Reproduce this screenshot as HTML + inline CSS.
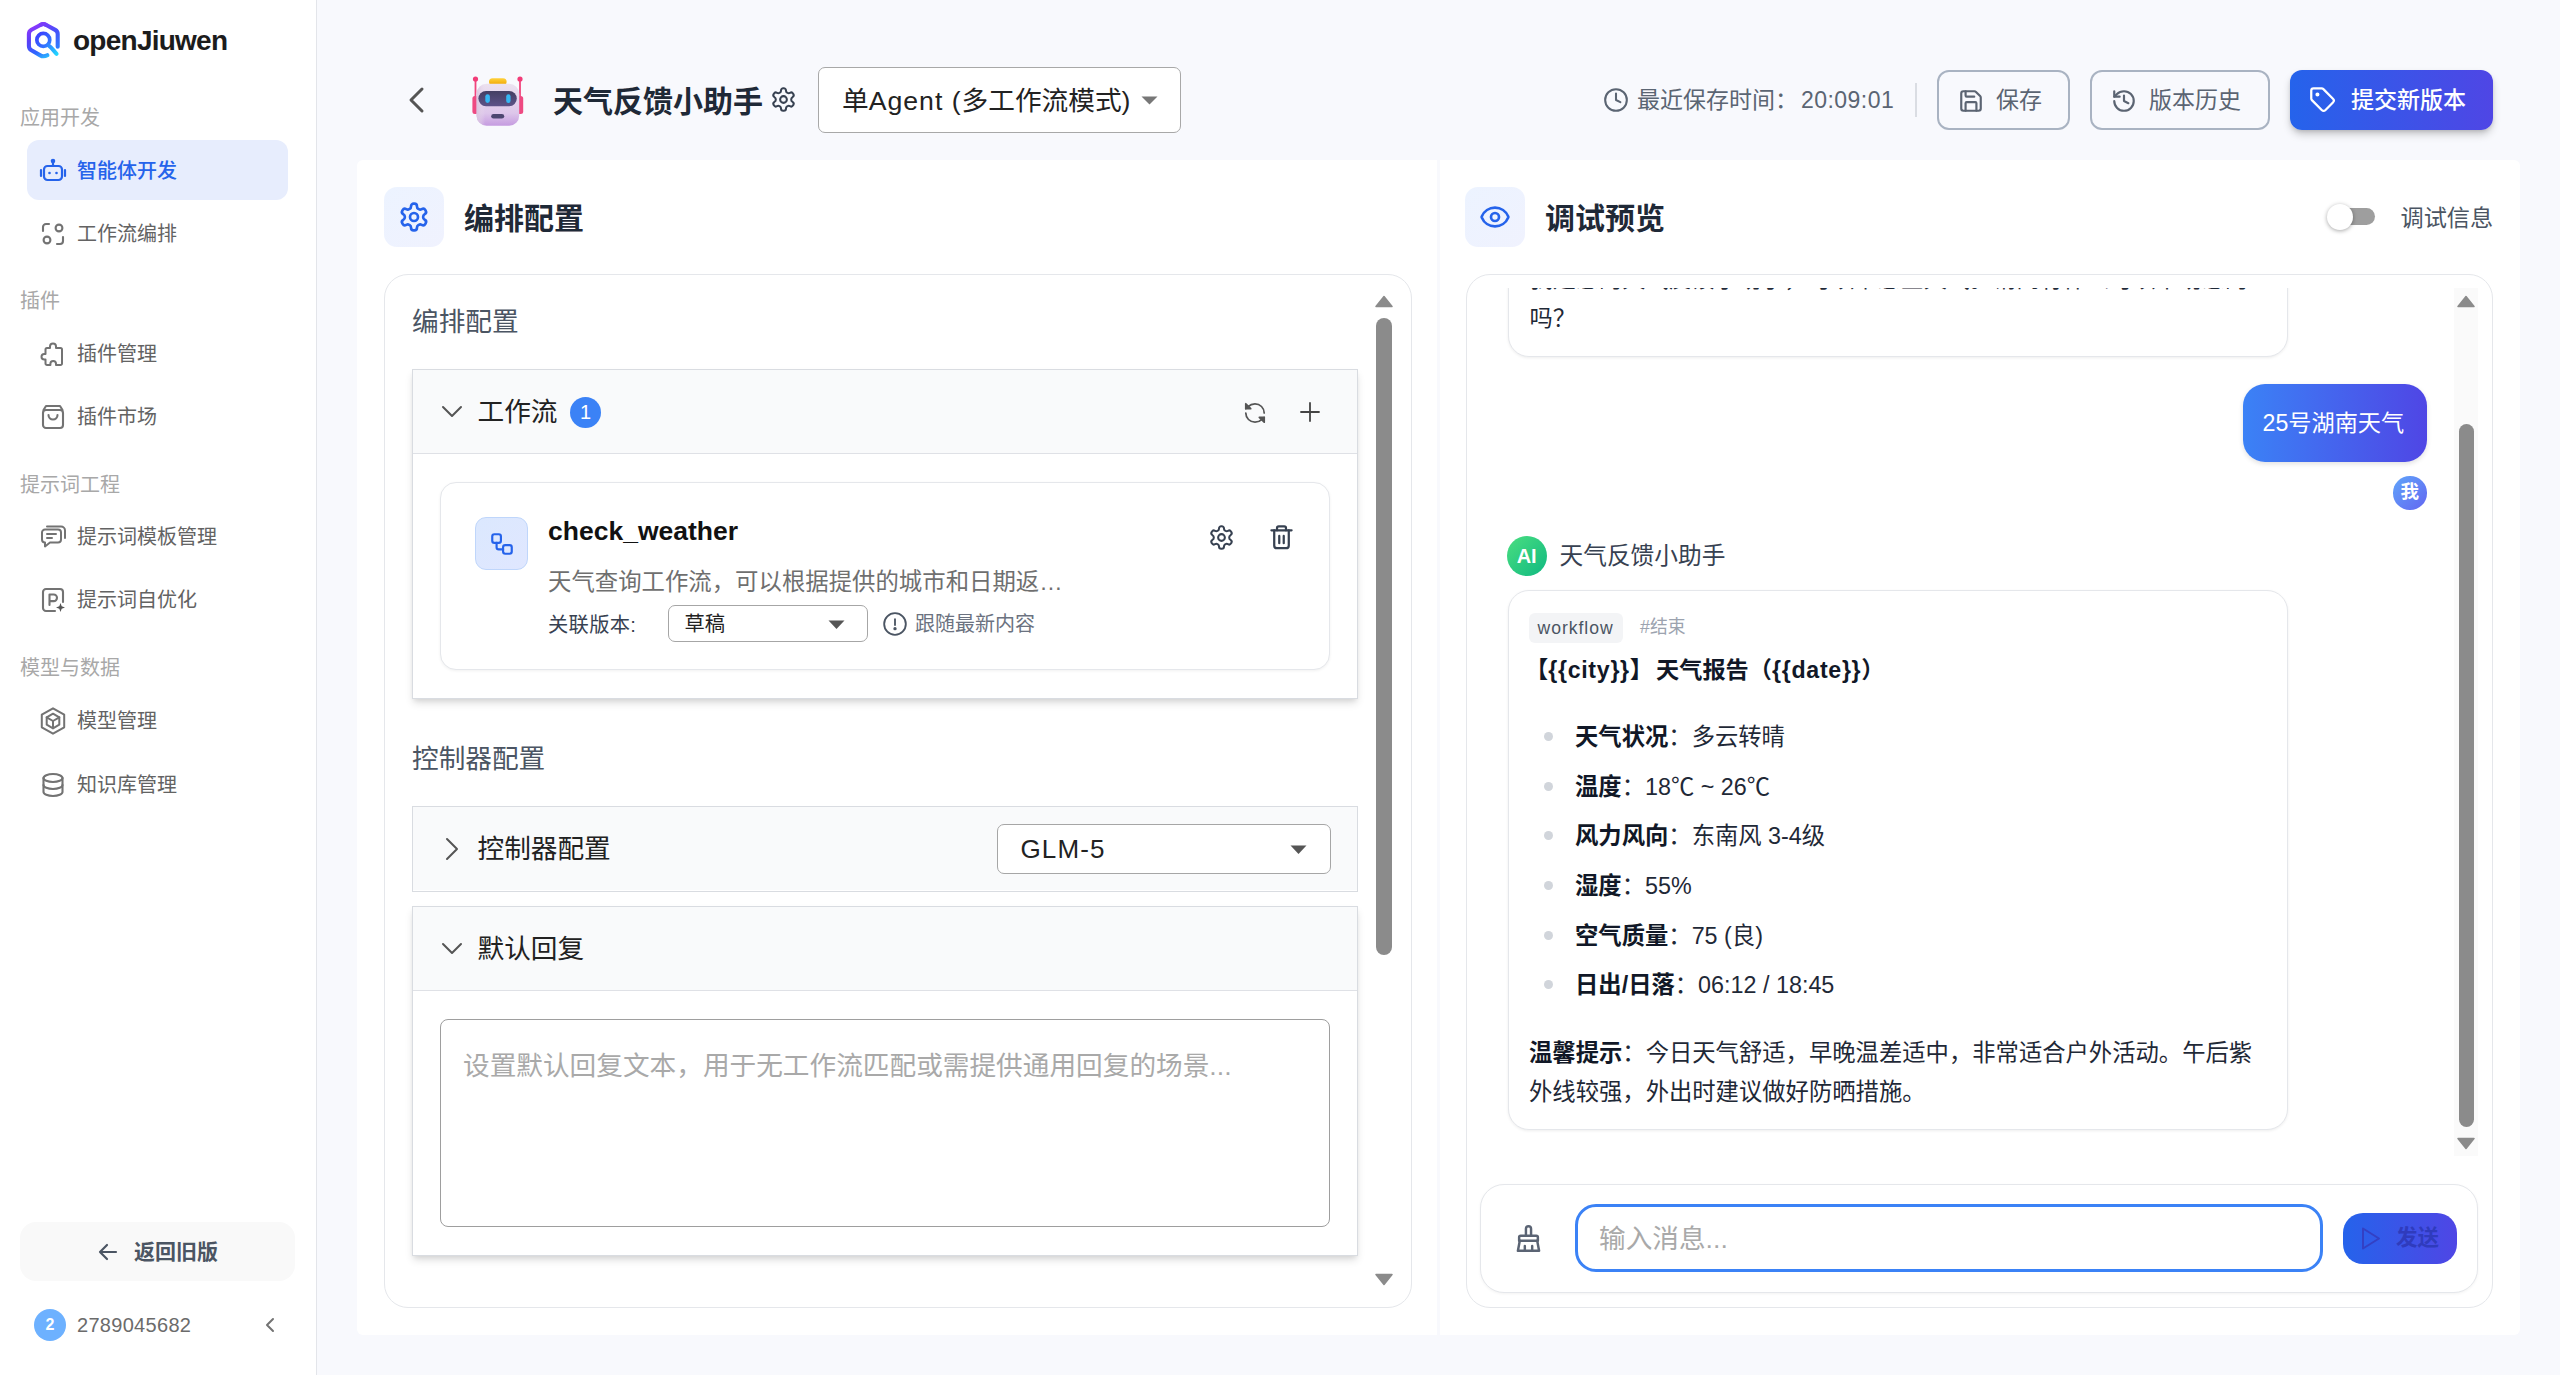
<!DOCTYPE html>
<html lang="zh-CN">
<head>
<meta charset="utf-8">
<title>openJiuwen - 天气反馈小助手</title>
<style>
*{box-sizing:border-box;margin:0;padding:0}
html,body{width:2560px;height:1375px;overflow:hidden}
body{background:#f8f9fd;font-family:"Liberation Sans","Noto Sans CJK SC",sans-serif;color:#1f2937;position:relative}
.abs{position:absolute}
svg{display:block}
/* ---------- sidebar ---------- */
#sidebar{position:absolute;left:0;top:0;width:316.500px;height:1375px;background:#fff;border-right:1.500px solid #e3e5ea}
.logo-text{position:absolute;left:73px;top:21px;font-size:28px;line-height:38px;font-weight:700;color:#1c1c1c;letter-spacing:-0.75px;margin-top:0.500px;white-space:nowrap}
.sec{position:absolute;left:20px;margin-top:1px;font-size:20px;line-height:28px;color:#a8a8a8;white-space:nowrap}
.nav{position:absolute;left:27px;width:261px;height:60px;border-radius:12px;color:#636363;font-size:20px;white-space:nowrap}
.nav .ic{position:absolute;left:12px;top:17px;width:28px;height:28px}
.nav .tx{position:absolute;left:50px;top:16px;line-height:31px}
.nav.on{background:#e7edfd;color:#2563eb}
.nav.on .tx{font-weight:500}
#back-old{position:absolute;left:20px;top:1222px;width:275px;height:59px;border-radius:16px;background:#f9f9f9;color:#4b5563;font-size:21px;font-weight:700}
#user{position:absolute;left:0;top:1300px;width:315px;height:50px}
/* ---------- header ---------- */
.btn{position:absolute;top:70px;height:60px;border:2px solid #a9b3c2;border-radius:12px;color:#5b6472;font-size:23px;white-space:nowrap}
/* ---------- panels ---------- */
.panel{position:absolute;top:160px;height:1175px;background:#fff}
.card{position:absolute;border:1.5px solid #e5e7eb;border-radius:24px;background:#fff}
.ptitle{position:absolute;font-size:30px;line-height:40px;font-weight:700;color:#1f2937;white-space:nowrap}
.picon{position:absolute;width:60px;height:60px;border-radius:13px;background:linear-gradient(135deg,#ecf3ff,#f0f2fe)}

.lbl{position:absolute;left:55px;font-size:26.670px;line-height:36px;color:#4b5563;white-space:nowrap}
.acc{position:absolute;left:55px;width:946px;border:1.500px solid #d9dce1;background:#fff}
.acc.sh{box-shadow:0 5px 8px -1px rgba(0,0,0,.13),0 3px 5px -2px rgba(0,0,0,.08)}
.acc .hd{position:absolute;left:0;top:0;width:100%;height:84px;background:#f9fafb}
.acc .hd.open{border-bottom:1.500px solid #dfe1e6}
.acc .ht{position:absolute;left:64.500px;top:23px;font-size:26.670px;line-height:38px;color:#222;white-space:nowrap}
.sel{position:absolute;border:1.500px solid #a6a6a6;border-radius:7px;background:#fff}
.sbar{position:absolute;width:16px;background:#8b8b8b;border-radius:8px}

.bub{position:absolute;left:67.500px;width:780px;border:1.500px solid #e5e7eb;border-radius:21px;background:#fff;box-shadow:0 1px 3px rgba(0,0,0,.07)}
.li{position:absolute;left:135px;margin-top:0.500px;font-size:23.330px;line-height:36px;color:#1f2937;white-space:nowrap}
.li b{font-weight:700;color:#111827}
.dot{position:absolute;left:103.500px;width:9px;height:9px;border-radius:50%;background:#d1d5db}
</style>
</head>
<body>

<!-- ================= SIDEBAR ================= -->
<div id="sidebar">
  <svg class="abs" style="left:25px;top:21px" width="37" height="38" viewBox="0 0 37 38">
    <defs>
      <linearGradient id="lg1" gradientUnits="userSpaceOnUse" x1="7" y1="4" x2="24" y2="37">
        <stop offset="0" stop-color="#9038ff"/><stop offset="0.35" stop-color="#5a3ef6"/><stop offset="0.72" stop-color="#2f66ff"/><stop offset="1" stop-color="#2cc6ff"/>
      </linearGradient>
      <linearGradient id="lg3" gradientUnits="userSpaceOnUse" x1="18" y1="3" x2="33" y2="27">
        <stop offset="0" stop-color="#7a3bfa"/><stop offset="0.45" stop-color="#4650fa"/><stop offset="1" stop-color="#2f7dff"/>
      </linearGradient>
      <linearGradient id="lg2" gradientUnits="userSpaceOnUse" x1="12" y1="12" x2="25" y2="26">
        <stop offset="0" stop-color="#3d3cff"/><stop offset="1" stop-color="#2f83ff"/>
      </linearGradient>
      <linearGradient id="lg4" gradientUnits="userSpaceOnUse" x1="23" y1="24" x2="32" y2="33">
        <stop offset="0" stop-color="#2f83ff"/><stop offset="1" stop-color="#22d6ff"/>
      </linearGradient>
    </defs>
    <path d="M22.300 34.200 Q18.600 36.300 15.300 34.400 L6.400 29.300 Q3.900 27.800 3.900 25 V13 Q3.900 10.200 6.400 8.700 L15.800 3.700 Q18.300 2.300 20.800 3.700" fill="none" stroke="url(#lg1)" stroke-width="4.100" stroke-linecap="round" stroke-linejoin="round"/>
    <path d="M15.800 3.700 Q18.300 2.300 20.800 3.700 L30.200 8.900 Q32.700 10.300 32.700 13.100 V25.800" fill="none" stroke="url(#lg3)" stroke-width="4.100" stroke-linecap="round" stroke-linejoin="round"/>
    <circle cx="18.300" cy="18.900" r="6.450" fill="none" stroke="url(#lg2)" stroke-width="3.700"/>
    <path d="M23.200 24.200 C26.500 26.500 28.500 29.500 31.600 32.800" fill="none" stroke="url(#lg4)" stroke-width="4" stroke-linecap="round"/>
  </svg>
  <div class="logo-text">openJiuwen</div>

  <div class="sec" style="top:103px">应用开发</div>
  <div class="nav on" style="top:140px">
    <svg class="ic" viewBox="0 0 28 28" fill="none" stroke="#2563eb" stroke-width="2.2" stroke-linecap="round" stroke-linejoin="round">
      <rect x="5" y="9" width="18" height="14" rx="3.5"/><path d="M14 9V5"/><circle cx="14" cy="4" r="1.2" fill="#2563eb"/>
      <path d="M2 13v6M26 13v6"/><circle cx="10.5" cy="16" r="1.3" fill="#2563eb" stroke="none"/><circle cx="17.5" cy="16" r="1.3" fill="#2563eb" stroke="none"/>
    </svg>
    <div class="tx">智能体开发</div>
  </div>
  <div class="nav" style="top:203px">
    <svg class="ic" viewBox="0 0 28 28" fill="none" stroke="#737373" stroke-width="2.1" stroke-linecap="round" stroke-linejoin="round">
      <path d="M10 4H7a3 3 0 0 0-3 3v4"/><path d="M18 24h3a3 3 0 0 0 3-3v-4"/><circle cx="20" cy="8" r="3.4"/><circle cx="8" cy="20" r="3.4"/>
    </svg>
    <div class="tx">工作流编排</div>
  </div>

  <div class="sec" style="top:286px">插件</div>
  <div class="nav" style="top:323px">
    <svg class="ic" viewBox="0 0 28 28" fill="none" stroke="#737373" stroke-width="2" stroke-linecap="round" stroke-linejoin="round">
      <path d="M11 6.5a3 3 0 0 1 6 0V8h4.5a1.5 1.5 0 0 1 1.500 1.500V23.500a1.500 1.500 0 0 1-1.500 1.500H17v-1.200a2.800 2.800 0 0 0-5.600 0V25H8a1.500 1.500 0 0 1-1.500-1.500V19.500H5.300a2.800 2.800 0 0 1 0-5.600H6.500V9.500A1.500 1.500 0 0 1 8 8h3z"/>
    </svg>
    <div class="tx">插件管理</div>
  </div>
  <div class="nav" style="top:386px">
    <svg class="ic" viewBox="0 0 28 28" fill="none" stroke="#737373" stroke-width="2.1" stroke-linecap="round" stroke-linejoin="round">
      <rect x="4" y="7" width="20" height="18" rx="3"/><path d="M4.500 7L7 3h14l2.500 4"/><path d="M9.500 12a4.500 4.500 0 0 0 9 0"/>
    </svg>
    <div class="tx">插件市场</div>
  </div>

  <div class="sec" style="top:470px">提示词工程</div>
  <div class="nav" style="top:506px">
    <svg class="ic" viewBox="0 0 28 28" fill="none" stroke="#737373" stroke-width="2" stroke-linecap="round" stroke-linejoin="round">
      <path d="M6 6.500h13a3 3 0 0 1 3 3v7a3 3 0 0 1-3 3H11l-5 4v-4a3 3 0 0 1-3-3v-7a3 3 0 0 1 3-3z"/><path d="M8 3.500h14a4 4 0 0 1 4 4V15"/><path d="M8 11h9M8 15h5"/>
    </svg>
    <div class="tx">提示词模板管理</div>
  </div>
  <div class="nav" style="top:569px">
    <svg class="ic" viewBox="0 0 28 28" fill="none" stroke="#737373" stroke-width="2.1" stroke-linecap="round" stroke-linejoin="round">
      <path d="M16 25H7a3 3 0 0 1-3-3V6a3 3 0 0 1 3-3h14a3 3 0 0 1 3 3v10"/><path d="M10.500 19V8.500h4.200a3.300 3.300 0 0 1 0 6.600H10.500"/>
      <path d="M21.500 17l1.200 3.300 3.300 1.200-3.300 1.200-1.200 3.300-1.200-3.300-3.300-1.200 3.300-1.200z" fill="#555" stroke="none"/>
    </svg>
    <div class="tx">提示词自优化</div>
  </div>

  <div class="sec" style="top:653px">模型与数据</div>
  <div class="nav" style="top:690px">
    <svg class="ic" viewBox="0 0 28 28" fill="none" stroke="#737373" stroke-width="2" stroke-linecap="round" stroke-linejoin="round">
      <path d="M14 1.300l11.200 6.400v12.600L14 26.700 2.800 20.300V7.700z"/><path d="M14 6.700l6.300 3.600v7.400L14 21.300l-6.300-3.600v-7.400z"/><path d="M7.700 10.300L14 14l6.300-3.700M14 14v7.300"/>
    </svg>
    <div class="tx">模型管理</div>
  </div>
  <div class="nav" style="top:753.500px">
    <svg class="ic" viewBox="0 0 28 28" fill="none" stroke="#737373" stroke-width="2.1" stroke-linecap="round" stroke-linejoin="round">
      <ellipse cx="14" cy="7" rx="9.500" ry="4"/><path d="M4.500 7v14c0 2.200 4.250 4 9.500 4s9.500-1.800 9.500-4V7"/><path d="M4.500 14c0 2.200 4.250 4 9.500 4s9.500-1.800 9.500-4"/>
    </svg>
    <div class="tx">知识库管理</div>
  </div>

  <div id="back-old">
    <svg class="abs" style="left:77px;top:19px" width="22" height="22" viewBox="0 0 22 22" fill="none" stroke="#4b5563" stroke-width="2.2" stroke-linecap="round" stroke-linejoin="round"><path d="M19 11H3M10 4l-7 7 7 7"/></svg>
    <div class="abs" style="left:114px;top:14px;line-height:32px;white-space:nowrap">返回旧版</div>
  </div>
  <div id="user">
    <div class="abs" style="left:34px;top:9px;width:32px;height:32px;border-radius:50%;background:#6db1ff;color:#fff;font-size:16px;font-weight:700;line-height:32px;text-align:center">2</div>
    <div class="abs" style="left:77px;top:10px;font-size:20px;line-height:30px;color:#6b6b6b;letter-spacing:0.3px">2789045682</div>
    <svg class="abs" style="left:262px;top:16px" width="16" height="18" viewBox="0 0 16 18" fill="none" stroke="#737373" stroke-width="2" stroke-linecap="round" stroke-linejoin="round"><path d="M11 3L5 9l6 6"/></svg>
  </div>
</div>

<!-- ================= HEADER ================= -->
<div id="header">
  <svg class="abs" style="left:406px;top:86px" width="22" height="28" viewBox="0 0 22 28" fill="none" stroke="#555" stroke-width="3" stroke-linecap="round" stroke-linejoin="round"><path d="M16 3L5 14l11 11"/></svg>
  <svg class="abs" style="left:470px;top:74px" width="56" height="54" viewBox="0 0 56 54">
    <defs>
      <linearGradient id="rb1" x1="0" y1="0" x2="0" y2="1"><stop offset="0" stop-color="#ece2f0"/><stop offset="0.7" stop-color="#ddc6ea"/><stop offset="1" stop-color="#c59be0"/></linearGradient>
      <linearGradient id="rb2" x1="0" y1="0" x2="0" y2="1"><stop offset="0" stop-color="#443f63"/><stop offset="1" stop-color="#5d5288"/></linearGradient>
      <linearGradient id="rb3" x1="0" y1="0" x2="0" y2="1"><stop offset="0" stop-color="#ffd23d"/><stop offset="1" stop-color="#f0a400"/></linearGradient>
      <linearGradient id="rb4" x1="0" y1="0" x2="1" y2="0"><stop offset="0" stop-color="#d9c4df"/><stop offset="0.2" stop-color="#e9dcee" stop-opacity="0"/></linearGradient>
    </defs>
    <rect x="4.600" y="3.500" width="1.800" height="20" fill="#f0457d"/><circle cx="5.500" cy="5" r="2.600" fill="#f23c78"/>
    <rect x="49.100" y="3.500" width="1.800" height="20" fill="#f0457d"/><circle cx="50" cy="5" r="2.600" fill="#f23c78"/>
    <rect x="2.400" y="22" width="6" height="18" rx="2.500" fill="#ee4a82"/><rect x="47.200" y="22" width="6" height="18" rx="2.500" fill="#ee4a82"/>
    <rect x="19" y="4.200" width="17.600" height="7" rx="3.500" fill="url(#rb3)"/>
    <rect x="6.600" y="9.800" width="42.600" height="42" rx="10" fill="url(#rb1)"/>
    <rect x="6.600" y="9.800" width="42.600" height="42" rx="10" fill="url(#rb4)"/>
    <rect x="8.400" y="17" width="38.400" height="15.200" rx="7.600" fill="url(#rb2)"/>
    <rect x="15.300" y="20.300" width="4.600" height="8.600" rx="2.300" fill="#36b6f2"/><rect x="36.200" y="20.300" width="4.400" height="8.600" rx="2.200" fill="#36b6f2"/>
    <rect x="21.200" y="40" width="13" height="4.600" rx="2.300" fill="#4d4670"/>
  </svg>
  <div class="abs" style="left:553px;top:80.500px;font-size:30px;line-height:42px;font-weight:700;color:#1f2937;white-space:nowrap">天气反馈小助手</div>
  <svg class="abs" style="left:770px;top:86px" width="27" height="27" viewBox="0 0 24 24" fill="none" stroke="#374151" stroke-width="1.800" stroke-linecap="round" stroke-linejoin="round"><path d="M12.220 2h-.440a2 2 0 0 0-2 2v.180a2 2 0 0 1-1 1.730l-.430.250a2 2 0 0 1-2 0l-.150-.080a2 2 0 0 0-2.730.730l-.220.380a2 2 0 0 0 .730 2.730l.150.100a2 2 0 0 1 1 1.720v.510a2 2 0 0 1-1 1.740l-.150.090a2 2 0 0 0-.730 2.730l.220.380a2 2 0 0 0 2.730.730l.150-.080a2 2 0 0 1 2 0l.430.250a2 2 0 0 1 1 1.730V20a2 2 0 0 0 2 2h.440a2 2 0 0 0 2-2v-.180a2 2 0 0 1 1-1.730l.430-.250a2 2 0 0 1 2 0l.150.080a2 2 0 0 0 2.730-.730l.220-.390a2 2 0 0 0-.730-2.730l-.150-.080a2 2 0 0 1-1-1.740v-.500a2 2 0 0 1 1-1.740l.150-.090a2 2 0 0 0 .730-2.730l-.220-.380a2 2 0 0 0-2.730-.730l-.150.080a2 2 0 0 1-2 0l-.430-.250a2 2 0 0 1-1-1.730V4a2 2 0 0 0-2-2z"/><circle cx="12" cy="12" r="3"/></svg>
  <div class="abs" style="left:818px;top:67px;width:363px;height:66px;border:1.500px solid #a8a8a8;border-radius:7px;background:#fff">
    <div class="abs" style="left:23px;top:12.500px;font-size:26.670px;line-height:40px;color:#222;white-space:nowrap">单<span style="letter-spacing:1px">Agent (</span>多工作流模式)</div>
    <svg class="abs" style="left:322px;top:28px" width="17" height="9" viewBox="0 0 17 9"><path d="M0.500 0.500h16L8.500 8.500z" fill="#777"/></svg>
  </div>
  <svg class="abs" style="left:1603px;top:87px" width="26" height="26" viewBox="0 0 24 24" fill="none" stroke="#5b6573" stroke-width="1.900" stroke-linecap="round" stroke-linejoin="round"><circle cx="12" cy="12" r="10"/><path d="M12 6v6l4 2"/></svg>
  <div class="abs" style="left:1637px;top:84px;font-size:23px;line-height:32px;color:#5b6573;white-space:nowrap">最近保存时间：<span style="margin-left:3px;letter-spacing:0.45px">20:09:01</span></div>
  <div class="abs" style="left:1915px;top:83px;width:2px;height:34px;background:#dadde3"></div>
  <div class="btn" style="left:1937px;width:133px">
    <svg class="abs" style="left:19px;top:16px" width="26" height="26" viewBox="0 0 24 24" fill="none" stroke="#5b6472" stroke-width="2" stroke-linecap="round" stroke-linejoin="round"><path d="M15.200 3a2 2 0 0 1 1.400.600l3.800 3.800a2 2 0 0 1 .600 1.400V19a2 2 0 0 1-2 2H5a2 2 0 0 1-2-2V5a2 2 0 0 1 2-2z"/><path d="M17 21v-7a1 1 0 0 0-1-1H8a1 1 0 0 0-1 1v7"/><path d="M7 3v4a1 1 0 0 0 1 1h7"/></svg>
    <div class="abs" style="left:57px;top:12px;line-height:33px">保存</div>
  </div>
  <div class="btn" style="left:2090px;width:180px">
    <svg class="abs" style="left:19px;top:16px" width="26" height="26" viewBox="0 0 24 24" fill="none" stroke="#5b6472" stroke-width="2" stroke-linecap="round" stroke-linejoin="round"><path d="M3 12a9 9 0 1 0 9-9 9.750 9.750 0 0 0-6.740 2.740L3 8"/><path d="M3 3v5h5"/><path d="M12 7v5l4 2"/></svg>
    <div class="abs" style="left:57px;top:12px;line-height:33px">版本历史</div>
  </div>
  <div class="abs" style="left:2290px;top:70px;width:203px;height:60px;border-radius:12px;background:linear-gradient(90deg,#2563eb,#4f46e5);box-shadow:0 5px 8px -1px rgba(0,0,0,.22),0 2px 4px -1px rgba(0,0,0,.12);color:#fff;font-size:23px;font-weight:500;white-space:nowrap">
    <svg class="abs" style="left:19px;top:16px" width="27" height="27" viewBox="0 0 24 24" fill="none" stroke="#fff" stroke-width="2" stroke-linecap="round" stroke-linejoin="round"><path d="M12.586 2.586A2 2 0 0 0 11.172 2H4a2 2 0 0 0-2 2v7.172a2 2 0 0 0 .586 1.414l8.704 8.704a2.426 2.426 0 0 0 3.420 0l6.580-6.580a2.426 2.426 0 0 0 0-3.420z"/><circle cx="7.500" cy="7.500" r=".8" fill="#fff"/></svg>
    <div class="abs" style="left:61px;top:14px;line-height:33px">提交新版本</div>
  </div>
</div>

<!-- ================= LEFT PANEL ================= -->
<div class="panel" id="lp" style="left:357px;width:1080px;border-radius:6px 0 0 6px">
  <div class="picon" style="left:26.500px;top:27px">
    <svg class="abs" style="left:14px;top:14px" width="32" height="32" viewBox="0 0 24 24" fill="none" stroke="#2563eb" stroke-width="2" stroke-linecap="round" stroke-linejoin="round"><path d="M12.220 2h-.440a2 2 0 0 0-2 2v.180a2 2 0 0 1-1 1.730l-.430.250a2 2 0 0 1-2 0l-.150-.080a2 2 0 0 0-2.730.730l-.220.380a2 2 0 0 0 .730 2.730l.150.100a2 2 0 0 1 1 1.720v.510a2 2 0 0 1-1 1.740l-.150.090a2 2 0 0 0-.730 2.730l.220.380a2 2 0 0 0 2.730.730l.150-.080a2 2 0 0 1 2 0l.430.250a2 2 0 0 1 1 1.730V20a2 2 0 0 0 2 2h.440a2 2 0 0 0 2-2v-.180a2 2 0 0 1 1-1.730l.430-.250a2 2 0 0 1 2 0l.150.080a2 2 0 0 0 2.730-.730l.220-.390a2 2 0 0 0-.730-2.730l-.150-.080a2 2 0 0 1-1-1.740v-.500a2 2 0 0 1 1-1.740l.150-.090a2 2 0 0 0 .730-2.730l-.220-.380a2 2 0 0 0-2.730-.730l-.150.080a2 2 0 0 1-2 0l-.430-.250a2 2 0 0 1-1-1.730V4a2 2 0 0 0-2-2z"/><circle cx="12" cy="12" r="3"/></svg>
  </div>
  <div class="ptitle" style="left:107px;top:38.500px">编排配置</div>
  <div class="card" style="left:27px;top:114px;width:1028px;height:1034px">
    <!-- card inner coords: origin (384,274) => subtract from abs -->
  </div>
  <div class="lbl" style="top:144px">编排配置</div>

  <div class="acc sh" style="top:209px;height:330px">
    <div class="hd open">
      <svg class="abs" style="left:27px;top:33px" width="24" height="18" viewBox="0 0 24 18" fill="none" stroke="#555" stroke-width="2" stroke-linecap="round" stroke-linejoin="round"><path d="M3 4l9 9 9-9"/></svg>
      <div class="ht">工作流</div>
      <div class="abs" style="left:157px;top:27px;width:31px;height:31px;border-radius:50%;background:#3b82f6;color:#fff;font-size:20px;line-height:31px;text-align:center">1</div>
      <svg class="abs" style="left:829px;top:30px" width="26" height="26" viewBox="0 0 24 24" fill="none" stroke="#555" stroke-width="1.600" stroke-linecap="round" stroke-linejoin="round"><path d="M20.500 12a8.500 8.500 0 0 0-8.500-8.500 9.200 9.200 0 0 0-6.400 2.600L3.500 8"/><path d="M3.500 3.500v4.500h4.500z" fill="#555"/><path d="M3.500 12a8.500 8.500 0 0 0 8.500 8.500 9.200 9.200 0 0 0 6.400-2.600L20.500 16"/><path d="M16 16h4.500v4.500z" fill="#555"/></svg>
      <svg class="abs" style="left:886px;top:31px" width="22" height="22" viewBox="0 0 22 22" fill="none" stroke="#444" stroke-width="1.800" stroke-linecap="round"><path d="M11 2v18M2 11h18"/></svg>
    </div>
    <div class="abs" style="left:27px;top:112px;width:890px;height:188px;border:1.500px solid #e5e7eb;border-radius:16px;background:#fff;box-shadow:0 1px 3px rgba(0,0,0,.06)">
      <div class="abs" style="left:34px;top:34px;width:53px;height:53px;border-radius:11px;background:linear-gradient(135deg,#dbe8fe,#e0e7ff);border:1.500px solid #bfd6fb">
        <svg class="abs" style="left:13px;top:13px" width="26" height="26" viewBox="0 0 24 24" fill="none" stroke="#2563eb" stroke-width="2" stroke-linecap="round" stroke-linejoin="round"><rect x="3" y="3" width="8" height="8" rx="2"/><path d="M7 11v4a2 2 0 0 0 2 2h4"/><rect x="13" y="13" width="8" height="8" rx="2"/></svg>
      </div>
      <div class="abs" id="cw" style="left:107px;top:29px;font-size:26.500px;line-height:38px;font-weight:700;color:#111;white-space:nowrap">check_weather</div>
      <div class="abs" style="left:107px;top:81.500px;font-size:23.400px;line-height:34px;color:#6f6f6f;white-space:nowrap">天气查询工作流，可以根据提供的城市和日期返…</div>
      <div class="abs" style="left:107px;top:127px;font-size:20.300px;line-height:30px;color:#374151;white-space:nowrap;letter-spacing:0.3px">关联版本:</div>
      <div class="sel" style="left:227px;top:122px;width:200px;height:37px">
        <div class="abs" style="left:15.500px;top:2.500px;font-size:20.300px;line-height:30px;color:#222">草稿</div>
        <svg class="abs" style="left:159px;top:13.500px" width="17" height="10" viewBox="0 0 17 10"><path d="M0.500 0.500h16L8.500 9z" fill="#555"/></svg>
      </div>
      <svg class="abs" style="left:441px;top:128px" width="26" height="26" viewBox="0 0 24 24" fill="none" stroke="#4b5563" stroke-width="1.700" stroke-linecap="round"><circle cx="12" cy="12" r="10"/><path d="M12 7.500v5.500"/><circle cx="12" cy="16.300" r=".7" fill="#4b5563"/></svg>
      <div class="abs" style="left:474px;top:126px;font-size:20px;line-height:30px;color:#6b7280;white-space:nowrap">跟随最新内容</div>
      <svg class="abs" style="left:767px;top:41px" width="27" height="27" viewBox="0 0 24 24" fill="none" stroke="#374151" stroke-width="1.800" stroke-linecap="round" stroke-linejoin="round"><path d="M12.220 2h-.440a2 2 0 0 0-2 2v.180a2 2 0 0 1-1 1.730l-.430.250a2 2 0 0 1-2 0l-.150-.080a2 2 0 0 0-2.730.730l-.220.380a2 2 0 0 0 .730 2.730l.150.100a2 2 0 0 1 1 1.720v.510a2 2 0 0 1-1 1.740l-.150.090a2 2 0 0 0-.730 2.730l.220.380a2 2 0 0 0 2.730.730l.150-.080a2 2 0 0 1 2 0l.430.250a2 2 0 0 1 1 1.730V20a2 2 0 0 0 2 2h.440a2 2 0 0 0 2-2v-.180a2 2 0 0 1 1-1.730l.430-.250a2 2 0 0 1 2 0l.150.080a2 2 0 0 0 2.730-.730l.220-.390a2 2 0 0 0-.730-2.730l-.150-.080a2 2 0 0 1-1-1.740v-.500a2 2 0 0 1 1-1.740l.150-.090a2 2 0 0 0 .730-2.730l-.220-.380a2 2 0 0 0-2.730-.730l-.150.080a2 2 0 0 1-2 0l-.430-.250a2 2 0 0 1-1-1.730V4a2 2 0 0 0-2-2z"/><circle cx="12" cy="12" r="3"/></svg>
      <svg class="abs" style="left:827px;top:40px" width="27" height="28" viewBox="0 0 24 25" fill="none" stroke="#374151" stroke-width="2" stroke-linecap="round" stroke-linejoin="round"><path d="M3 6.500h18"/><path d="M8 6.500V4.500a1.500 1.500 0 0 1 1.500-1.500h5A1.500 1.500 0 0 1 16 4.500v2"/><path d="M5.500 6.500v13.500a2.500 2.500 0 0 0 2.500 2.500h8a2.500 2.500 0 0 0 2.500-2.500V6.500"/><path d="M10 11.500v6.500M14 11.500v6.500"/></svg>
    </div>
  </div>

  <div class="lbl" style="top:581px">控制器配置</div>
  <div class="acc" style="top:646px;height:86px">
    <div class="hd" style="height:83px">
      <svg class="abs" style="left:30px;top:29px" width="18" height="26" viewBox="0 0 18 26" fill="none" stroke="#555" stroke-width="2" stroke-linecap="round" stroke-linejoin="round"><path d="M4 3l10 10L4 23"/></svg>
      <div class="ht">控制器配置</div>
      <div class="sel" style="left:584px;top:17px;width:334px;height:50px">
        <div class="abs" style="left:22.500px;top:5.500px;font-size:26px;line-height:36px;color:#222;letter-spacing:1.1px">GLM-5</div>
        <svg class="abs" style="left:292px;top:20px" width="17" height="10" viewBox="0 0 17 10"><path d="M0.500 0.500h16L8.500 9z" fill="#555"/></svg>
      </div>
    </div>
  </div>
  <div class="acc sh" style="top:746px;height:350px">
    <div class="hd open">
      <svg class="abs" style="left:27px;top:33px" width="24" height="18" viewBox="0 0 24 18" fill="none" stroke="#555" stroke-width="2" stroke-linecap="round" stroke-linejoin="round"><path d="M3 4l9 9 9-9"/></svg>
      <div class="ht">默认回复</div>
    </div>
    <div class="abs" style="left:27px;top:112px;width:890px;height:208px;border:1.500px solid #9e9e9e;border-radius:8px;background:#fff">
      <div class="abs" style="left:22px;top:28px;font-size:26.670px;line-height:36px;color:#a9a9a9;white-space:nowrap">设置默认回复文本，用于无工作流匹配或需提供通用回复的场景...</div>
    </div>
  </div>

  <svg class="abs" style="left:1018px;top:135px" width="18" height="13" viewBox="0 0 18 13"><path d="M9 1.500L17 11.500H1z" fill="#8b8b8b" stroke="#8b8b8b" stroke-width="1.500" stroke-linejoin="round"/></svg>
  <div class="sbar" style="left:1019px;top:158px;height:637px"></div>
  <svg class="abs" style="left:1018px;top:1113px" width="18" height="13" viewBox="0 0 18 13"><path d="M9 11.500L17 1.500H1z" fill="#8b8b8b" stroke="#8b8b8b" stroke-width="1.500" stroke-linejoin="round"/></svg>

</div>

<!-- ================= RIGHT PANEL ================= -->
<div class="panel" id="rp" style="left:1440px;width:1080px;border-radius:0 6px 6px 0">
  <div class="picon" style="left:25px;top:27px">
    <svg class="abs" style="left:13px;top:14px" width="34" height="32" viewBox="0 0 24 24" fill="none" stroke="#2563eb" stroke-width="2" stroke-linecap="round" stroke-linejoin="round"><path d="M2.060 12.350a1 1 0 0 1 0-.700 10.750 10.750 0 0 1 19.880 0 1 1 0 0 1 0 .700 10.750 10.750 0 0 1-19.880 0z"/><circle cx="12" cy="12" r="3"/></svg>
  </div>
  <div class="ptitle" style="left:105px;top:39px">调试预览</div>
  <div class="abs" style="left:897px;top:48px;width:38px;height:17px;border-radius:8.500px;background:#9e9e9e"></div>
  <div class="abs" style="left:887px;top:44px;width:26px;height:26px;border-radius:50%;background:#fff;box-shadow:0 1px 4px rgba(0,0,0,.35)"></div>
  <div class="abs" style="left:960.500px;top:42px;font-size:23.200px;line-height:32px;color:#4b5563;white-space:nowrap">调试信息</div>

  <div class="card" style="left:25.500px;top:113.500px;width:1027.500px;height:1034.500px"></div>

  <!-- scroll area -->
  <div class="abs" style="left:40px;top:128px;width:1000px;height:868px;overflow:hidden">
    <div class="bub" style="left:27.500px;top:-60px;height:128.500px">
      <div class="abs" style="left:21px;top:30.500px;font-size:23.200px;line-height:39px;color:#1f2937;white-space:nowrap">我是您的天气反馈小助手，可以帮您查天气。请问有什么可以帮助您的<br>吗？</div>
    </div>
    <div class="abs" style="left:974px;top:0;width:24px;height:868px;background:#fafafa"></div>
  </div>
  <svg class="abs" style="left:1017px;top:135px" width="18" height="13" viewBox="0 0 18 13"><path d="M9 1.500L17 11.500H1z" fill="#8b8b8b" stroke="#8b8b8b" stroke-width="1.500" stroke-linejoin="round"/></svg>
  <div class="sbar" style="left:1018.500px;top:263.500px;height:703.500px;width:15px"></div>
  <svg class="abs" style="left:1017px;top:977px" width="18" height="13" viewBox="0 0 18 13"><path d="M9 11.500L17 1.500H1z" fill="#8b8b8b" stroke="#8b8b8b" stroke-width="1.500" stroke-linejoin="round"/></svg>

  <div class="abs" style="left:802.500px;top:224px;width:184px;height:78px;border-radius:22px;background:linear-gradient(90deg,#3b82f6,#4f46e5);box-shadow:0 2px 5px rgba(0,0,0,.12);color:#fff;font-size:23.200px;line-height:36px;white-space:nowrap">
    <div class="abs" style="left:20px;top:21px">25号湖南天气</div>
  </div>
  <div class="abs" style="left:953px;top:316px;width:33.500px;height:33.500px;border-radius:50%;background:linear-gradient(135deg,#60a5fa,#6366f1);color:#fff;font-size:18.500px;font-weight:700;line-height:32px;text-align:center">我</div>

  <div class="abs" style="left:66.500px;top:376px;width:40px;height:40px;border-radius:50%;background:linear-gradient(135deg,#4ade80,#10b981);color:#fff;font-size:20px;font-weight:700;line-height:40px;text-align:center;letter-spacing:-0.3px">AI</div>
  <div class="abs" style="left:119.500px;top:378px;font-size:23.700px;line-height:36px;color:#374151;white-space:nowrap">天气反馈小助手</div>

  <div class="bub" style="top:429.500px;height:540px"></div>
  <div class="abs" style="left:89px;top:453px;width:93.500px;height:29.500px;border-radius:6px;background:#f3f4f6"></div>
  <div class="abs" id="wf" style="left:97.500px;top:455px;font-size:17.600px;line-height:26px;color:#4b5563;white-space:nowrap;letter-spacing:0.95px">workflow</div>
  <div class="abs" style="left:200px;top:454px;font-size:17.800px;line-height:26px;color:#9ca3af;white-space:nowrap">#结束</div>
  <div class="abs" id="hd1" style="left:89px;top:492px;font-size:23.200px;line-height:36px;font-weight:700;color:#111827;white-space:nowrap;margin-left:-4px">【<span style="letter-spacing:0.7px">{{city}}</span>】<span style="margin-left:3px">天气报告</span>（<span style="letter-spacing:0.7px">{{date}}</span>）</div>
    <div class="dot" style="top:571.7px"></div><div class="li" style="top:558.2px"><b>天气状况</b>：多云转晴</div>
    <div class="dot" style="top:621.5px"></div><div class="li" style="top:608.0px"><b>温度</b>：18℃ ~ 26℃</div>
    <div class="dot" style="top:671.1px"></div><div class="li" style="top:657.6px"><b>风力风向</b>：东南风 3-4级</div>
    <div class="dot" style="top:720.9px"></div><div class="li" style="top:707.4px"><b>湿度</b>：55%</div>
    <div class="dot" style="top:770.5px"></div><div class="li" style="top:757.0px"><b>空气质量</b>：75 (良)</div>
    <div class="dot" style="top:820.3px"></div><div class="li" style="top:806.8px"><b>日出/日落</b>：06:12 / 18:45</div>

  <div class="abs" style="left:89px;top:873.500px;width:740px;font-size:23.330px;line-height:39px;color:#1f2937"><b style="color:#111827">温馨提示</b>：今日天气舒适，早晚温差适中，非常适合户外活动。午后紫外线较强，外出时建议做好防晒措施。</div>

  <!-- input -->
  <div class="card" style="left:40px;top:1023.500px;width:998px;height:109px;box-shadow:0 1px 3px rgba(0,0,0,.05)"></div>
  <svg class="abs" style="left:75px;top:1064px" width="27" height="29" viewBox="0 0 24 26" fill="none" stroke="#5b6474" stroke-width="2.200" stroke-linecap="round" stroke-linejoin="round"><path d="M9.700 10.500V4.300a2.300 2.300 0 0 1 4.600 0v6.200"/><path d="M5 10.500h14a1.400 1.400 0 0 1 1.400 1.400V15H3.600v-3.100A1.400 1.400 0 0 1 5 10.500z"/><path d="M4.200 15l-1.700 9h19l-1.700-9"/><path d="M8.700 24v-4.200M15.300 24v-4.200"/></svg>
  <div class="abs" style="left:135px;top:1044px;width:748px;height:67.500px;border:3px solid #3b82f6;border-radius:21px;background:#fff">
    <div class="abs" style="left:21px;top:13px;font-size:26.670px;line-height:38px;color:#a9a9a9;white-space:nowrap">输入消息...</div>
  </div>
  <div class="abs" style="left:903px;top:1053px;width:113.500px;height:51px;border-radius:20px;background:linear-gradient(90deg,#2563eb,#4f46e5)">
    <svg class="abs" style="left:17px;top:13px" width="22" height="25" viewBox="0 0 22 25" fill="none" stroke="#3340c4" stroke-width="2" stroke-linejoin="round"><path d="M3 2.500l16 10-16 10z"/></svg>
    <div class="abs" style="left:53px;top:9px;font-size:21.500px;line-height:32px;color:#2f3bbd;font-weight:700;white-space:nowrap">发送</div>
  </div>

</div>

</body>
</html>
